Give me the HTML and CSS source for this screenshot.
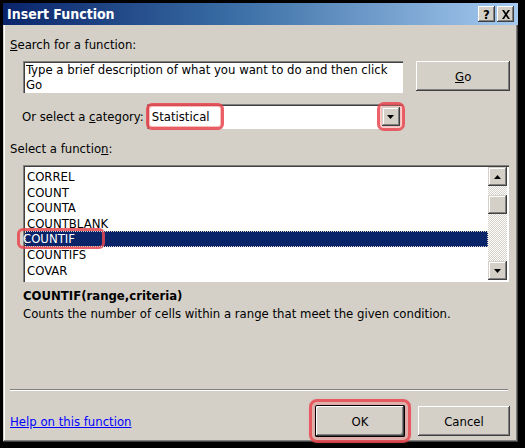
FILE: index.html
```html
<!DOCTYPE html>
<html>
<head>
<meta charset="utf-8">
<link rel="stylesheet" href="styles.css">
</head>
<body>
<div class="dialog">
  <div class="titlebar">
    <span class="title">Insert Function</span>
    <div class="tbtns">
      <span class="tbtn">?</span>
      <span class="tbtn x">
        <svg width="10" height="9" viewBox="0 0 10 9"><path d="M1 0h2l2 3 2-3h2L6 4.5 9 9H7L5 6 3 9H1l3-4.5z" fill="#000"/></svg>
      </span>
    </div>
  </div>
  <div class="body">
    <div class="label l1"><u>S</u>earch for a function:</div>
    <div class="row search-row">
      <div class="textarea">Type a brief description of what you want to do and then click Go</div>
      <div class="btn go"><u>G</u>o</div>
    </div>
    <div class="row cat-row">
      <span class="label">Or select a <u>c</u>ategory:</span>
      <div class="combo">
        <span class="combo-text hl">Statistical</span>
        <span class="arrow-wrap hl"><span class="sbtn"><svg width="7" height="4" viewBox="0 0 7 4"><path d="M0 0h7L3.5 4z" fill="#000"/></svg></span></span>
      </div>
    </div>
    <div class="label l2">Select a functio<u>n</u>:</div>
    <div class="list">
      <div class="items">
        <div class="item">CORREL</div>
        <div class="item">COUNT</div>
        <div class="item">COUNTA</div>
        <div class="item">COUNTBLANK</div>
        <div class="item sel"><span class="hl-item">COUNTIF</span></div>
        <div class="item">COUNTIFS</div>
        <div class="item">COVAR</div>
      </div>
      <div class="scroll">
        <span class="sbtn big"><svg width="7" height="4" viewBox="0 0 7 4"><path d="M3.5 0L7 4H0z" fill="#000"/></svg></span>
        <span class="thumb"></span>
        <span class="track"></span>
        <span class="sbtn big"><svg width="7" height="4" viewBox="0 0 7 4"><path d="M0 0h7L3.5 4z" fill="#000"/></svg></span>
      </div>
    </div>
    <div class="sig">COUNTIF(range,criteria)</div>
    <div class="desc">Counts the number of cells within a range that meet the given condition.</div>
    <div class="spacer"></div>
    <div class="sep"></div>
    <div class="row foot">
      <a class="link" href="#">Help on this function</a>
      <div class="btn ok hl">OK</div>
      <div class="btn cancel">Cancel</div>
    </div>
  </div>
</div>
</body>
</html>
```
FILE: styles.css
```css
html, body { margin: 0; padding: 0; }
body {
  width: 525px; height: 448px; background: #000; overflow: hidden;
  font-family: "DejaVu Sans Condensed", "DejaVu Sans", sans-serif; font-stretch: condensed;
  font-size: 13px; color: #000;
}
.dialog {
  margin: 3px 5px 0 3px; width: 515px; height: 439px; background: #d4d0c8;
  box-shadow: inset -1px -1px 0 #404040, inset 1px 1px 0 #d4d0c8, inset -2px -2px 0 #808080, inset 2px 2px 0 #fff;
  display: flex; flex-direction: column; box-sizing: border-box; padding: 0 2px 2px 1px;
}
.titlebar {
  height: 22px; display: flex; align-items: center; justify-content: space-between;
  background: linear-gradient(90deg, #0a246a 0%, #3a6ea5 45%, #a6caf0 100%);
  padding: 0 4px 0 4px; margin: 0 -2px 0 -1px;
}
.title { color: #fff; font-weight: bold; font-size: 14px; font-family: "DejaVu Sans Condensed", "DejaVu Sans", sans-serif; }
.tbtns { display: flex; gap: 2px; }
.tbtn {
  width: 17px; height: 16px; background: #d4d0c8; display: flex; align-items: center; justify-content: center;
  font-weight: bold; font-size: 13px; line-height: 1; font-family: "DejaVu Sans", sans-serif;
  box-shadow: inset -1px -1px 0 #404040, inset 1px 1px 0 #fff, inset -2px -2px 0 #808080;
}
.body { flex: 1; display: flex; flex-direction: column; padding: 0 6px 0 6px; }
.label { line-height: 15px; }
.l1 { margin-top: 12px; }
.row { display: flex; align-items: center; }
.search-row { margin-top: 9px; margin-left: 13px; align-items: flex-start; }
.textarea {
  width: 382px; height: 32px; box-sizing: border-box; background: #fff; padding: 1px 3px;
  line-height: 15px;
  box-shadow: inset 1px 1px 0 #808080, inset 2px 2px 0 #404040, inset -1px -1px 0 #fff;
}
.btn {
  display: flex; align-items: center; justify-content: center; background: #d4d0c8; box-sizing: border-box;
  box-shadow: inset -1px -1px 0 #404040, inset 1px 1px 0 #fff, inset -2px -2px 0 #808080;
}
.go { width: 94px; height: 30px; margin-left: 13px; }
.cat-row { margin-top: 11px; margin-left: 12px; }
.combo {
  margin-left: 3px; width: 256px; height: 25px; background: #fff; box-sizing: border-box; display: flex;
  align-items: center; justify-content: space-between; padding: 2px 2px 2px 3px;
  box-shadow: inset 1px 1px 0 #808080, inset 2px 2px 0 #404040, inset -1px -1px 0 #fff;
}
.combo-text { padding: 2px 10px 2px 2px; }
.hl { outline: 3px solid rgba(232, 72, 80, 0.85); box-shadow: 0 0 3px 2px rgba(240,130,130,0.6); border-radius: 2px; }
.combo-text.hl { outline-offset: 1px; }
.arrow-wrap { display: flex; margin-right: 1px; }
.arrow-wrap.hl { outline-offset: 2px; }
.sbtn {
  width: 18px; height: 19px; background: #d4d0c8; display: flex; align-items: center; justify-content: center;
  box-shadow: inset -1px -1px 0 #404040, inset 1px 1px 0 #d4d0c8, inset -2px -2px 0 #808080, inset 2px 2px 0 #fff;
}
.l2 { margin-top: 12px; }
.list {
  margin-top: 9px; margin-left: 13px; width: 486px; height: 117px; background: #fff; box-sizing: border-box;
  display: flex; padding: 2px 2px 2px 2px;
  box-shadow: inset 1px 1px 0 #808080, inset 2px 2px 0 #404040, inset -1px -1px 0 #fff;
}
.items { flex: 1; padding-top: 2px; }
.item { height: 15.6px; line-height: 15.6px; padding-left: 2px; }
.sel { background: #0a246a; color: #fff; outline: 1px dotted #d4d0c8; outline-offset: -1px; }
.hl-item { display: inline-block; padding: 0 26px 0 2px; margin-left: -6px; line-height: 13px;
  outline: 3px solid rgba(232, 72, 80, 0.85); outline-offset: 1px; border-radius: 2px; }
.scroll {
  width: 19px; display: flex; flex-direction: column;
  background-color: #eeede9;
  background-image: repeating-conic-gradient(#fff 0 25%, #d4d0c8 0 50%);
  background-size: 2px 2px;
}
.sbtn.big { width: 19px; height: 19px; flex: none; }
.thumb { height: 19px; margin-top: 9px; background: #d4d0c8; flex: none;
  box-shadow: inset -1px -1px 0 #404040, inset 1px 1px 0 #d4d0c8, inset -2px -2px 0 #808080, inset 2px 2px 0 #fff; }
.track { flex: 1; }
.sig { margin-top: 6px; margin-left: 13px; font-weight: bold; }
.desc { margin-top: 3px; margin-left: 13px; }
.spacer { flex: 1; }
.sep { height: 0; border-top: 1px solid #808080; border-bottom: 1px solid #fff; margin: 0 2px 0 0; }
.foot { margin-top: 14px; margin-bottom: 3px; }
.link { color: #0000ff; text-decoration: underline; flex: 1; }
.ok { width: 90px; height: 32px; outline-offset: 3px;
  box-shadow: inset 0 0 0 1px #000, inset -2px -2px 0 #404040, inset 2px 2px 0 #fff, inset -3px -3px 0 #808080; }
.ok.hl { box-shadow: inset 0 0 0 1px #000, inset -2px -2px 0 #404040, inset 2px 2px 0 #fff, inset -3px -3px 0 #808080, 0 0 4px 4px rgba(240,130,130,0.5); }
.cancel { width: 92px; height: 30px; margin-left: 13px; }
```
